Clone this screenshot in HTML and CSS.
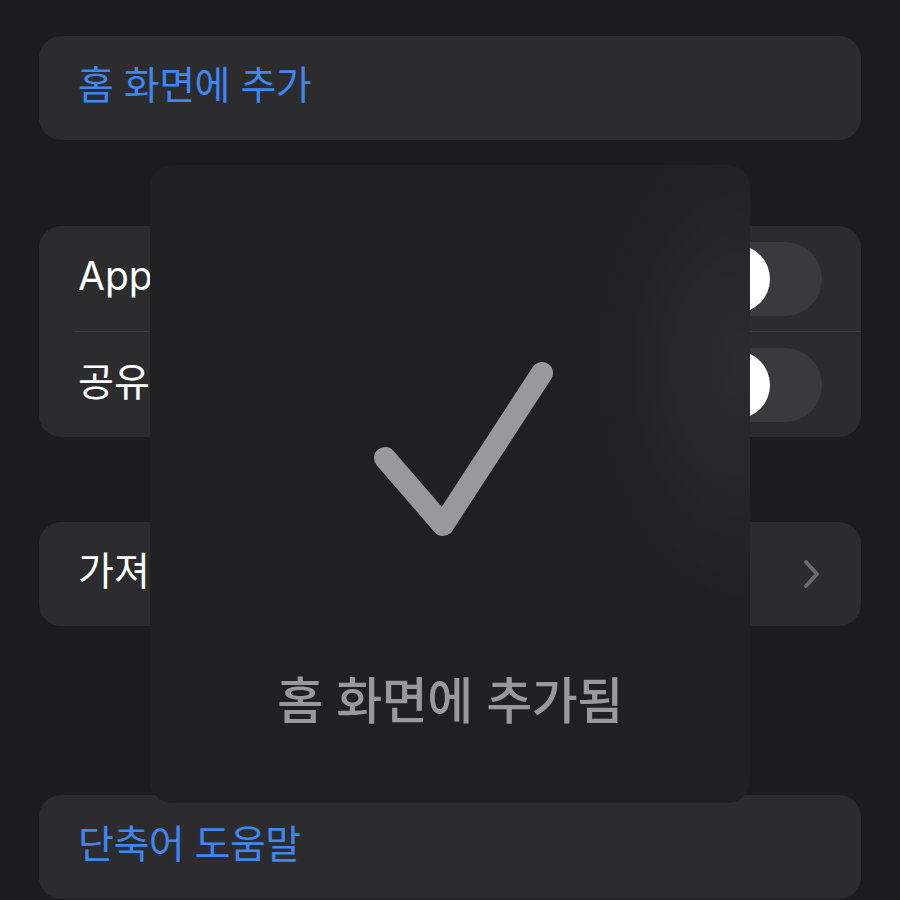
FILE: index.html
```html
<!DOCTYPE html>
<html lang="ko">
<head>
<meta charset="utf-8">
<link rel="stylesheet" href="styles.css">
</head>
<body>
<div class="page">
  <div class="card card-first">
    <div class="row"><span class="label blue">홈 화면에 추가</span></div>
  </div>

  <div class="card card-toggles">
    <div class="row">
      <span class="label">Apple Watch에서 보기</span>
      <div class="toggle"><div class="knob"></div></div>
    </div>
    <div class="divider"></div>
    <div class="row">
      <span class="label">공유 시트에서 보기</span>
      <div class="toggle"><div class="knob"></div></div>
    </div>
  </div>

  <div class="card card-import">
    <div class="row">
      <span class="label">가져오기 질문</span>
      <svg class="chevron" width="18" height="30" viewBox="0 0 18 30"><polyline points="3,3 14,15 3,27" fill="none" stroke="#69696e" stroke-width="4" stroke-linecap="round" stroke-linejoin="round"/></svg>
    </div>
  </div>

  <div class="card card-help">
    <div class="row"><span class="label blue">단축어 도움말</span></div>
  </div>

  <div class="hud">
    <svg class="check" width="600" height="240" viewBox="0 0 600 240"><polyline points="235,123 293,190 392,38" fill="none" stroke="#98989d" stroke-width="22" stroke-linecap="round" stroke-linejoin="round"/></svg>
    <div class="hud-text">홈 화면에 추가됨</div>
  </div>
</div>
</body>
</html>
```

FILE: styles.css
```css
html, body {
  margin: 0;
  padding: 0;
  background: #1c1c1e;
}
body {
  font-family: Inter, "Noto Sans CJK KR", sans-serif;
  width: 900px;
  height: 900px;
  overflow: hidden;
}
.page {
  position: relative;
  padding: 36px 39px 0 39px;
  display: flex;
  flex-direction: column;
}
.card {
  background: #2c2c2e;
  border-radius: 22px;
  overflow: hidden;
}
.card-toggles { margin-top: 86px; }
.card-import { margin-top: 85px; }
.card-help { margin-top: 169px; }
.row {
  height: 104px;
  box-sizing: border-box;
  display: flex;
  align-items: center;
  justify-content: space-between;
  padding-left: 39px;
}
.label {
  font-size: 39px;
  line-height: 50px;
  padding-bottom: 6px;
  color: #ffffff;
  letter-spacing: 0;
  white-space: nowrap;
  font-family: Inter, "Noto Sans CJK KR", sans-serif;
}
.label.blue {
  color: #3f86ee;
  letter-spacing: -0.5px;
}
.card-toggles .row { height: 105px; }
.divider {
  height: 1px;
  background: #3d3d41;
  margin-left: 35px;
}
.toggle {
  width: 123px;
  height: 74px;
  border-radius: 37px;
  background: #3a3a3e;
  margin-right: 39px;
  padding: 3px;
  box-sizing: border-box;
  display: flex;
  align-items: center;
}
.knob {
  width: 68px;
  height: 68px;
  border-radius: 50%;
  background: #ffffff;
}
.chevron {
  margin-right: 40px;
}
.hud {
  position: absolute;
  left: 150px;
  top: 165px;
  width: 600px;
  height: 638px;
  border-radius: 22px;
  background:
    radial-gradient(ellipse 150px 240px at 590px 200px, rgba(255,255,255,0.055), rgba(255,255,255,0) 100%),
    #202022;
  display: flex;
  flex-direction: column;
  align-items: center;
}
.check {
  margin-top: 170px;
  display: block;
}
.hud-text {
  margin-top: 92px;
  font-family: "Noto Sans CJK KR", sans-serif;
  font-size: 50px;
  line-height: 60px;
  font-weight: 500;
  letter-spacing: -0.5px;
  color: #98989d;
  white-space: nowrap;
}
```
